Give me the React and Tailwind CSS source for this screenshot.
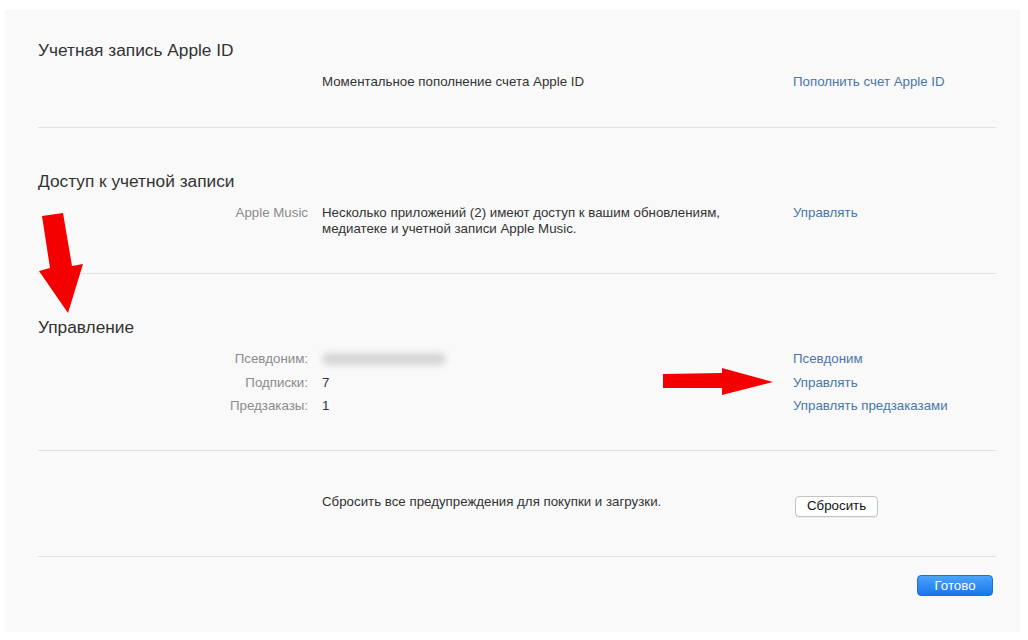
import React from "react";

const font = { fontFamily: '"Liberation Sans", Arial, sans-serif' };

function Section({ title, children, className = "" }) {
  return (
    <div className={className}>
      {title && (
        <h2 className="text-[17.3px] leading-[20px] text-[#333] ml-[33px]">{title}</h2>
      )}
      {children}
    </div>
  );
}

function Row({ label, value, link }) {
  return (
    <div className="grid grid-cols-[303px_457px_1fr] gap-x-[14px] text-[13.3px]">
      <div className="text-right text-[#8b8b8b]">{label}</div>
      <div className="text-[#333]">{value}</div>
      <div className="text-[#4a77aa]">{link}</div>
    </div>
  );
}

function Divider() {
  return <div className="ml-[33px] mr-[24px] h-px bg-[#e1e1e1]" />;
}

export default function App() {
  return (
    <div className="relative w-[1028px] h-[640px] bg-white pt-[10px] pl-[5px] pr-[8px] pb-[8px]" style={font}>
      <div className="h-full bg-[#f9f9f9] flex flex-col">
        {/* Apple ID */}
        <Section title="Учетная запись Apple ID" className="pt-[30px] pb-[37px]">
          <div className="mt-[14px] leading-[16px]">
            <Row value="Моментальное пополнение счета Apple ID" link="Пополнить счет Apple ID" />
          </div>
        </Section>
        <Divider />

        {/* Access */}
        <Section title="Доступ к учетной записи" className="pt-[43px] pb-[36px]">
          <div className="mt-[14px] leading-[16px]">
            <Row
              label="Apple Music"
              value={
                <>
                  Несколько приложений (2) имеют доступ к вашим обновлениям,
                  <br />
                  медиатеке и учетной записи Apple Music.
                </>
              }
              link="Управлять"
            />
          </div>
        </Section>
        <Divider />

        {/* Manage */}
        <Section title="Управление" className="pt-[43px] pb-[32px]">
          <div className="mt-[10px] leading-[23.5px]">
            <Row
              label="Псевдоним:"
              value={
                <div className="h-[23.5px] flex items-center">
                  <div className="w-[124px] h-[12px] rounded-full bg-[#d6d6d6] blur-[3px]" />
                </div>
              }
              link="Псевдоним"
            />
            <Row label="Подписки:" value="7" link="Управлять" />
            <Row label="Предзаказы:" value="1" link="Управлять предзаказами" />
          </div>
        </Section>
        <Divider />

        {/* Reset */}
        <div className="pt-[43px] pb-[39px] grid grid-cols-[303px_457px_1fr] gap-x-[14px] text-[13.3px] leading-[16px]">
          <div />
          <div className="text-[#333]">Сбросить все предупреждения для покупки и загрузки.</div>
          <div className="pt-[2px]">
            <button className="ml-[2px] h-[21px] px-[11px] rounded-[4px] border border-[#c4c4c4] bg-white text-[13.3px] text-[#111] shadow-[0_1px_0_rgba(0,0,0,0.05)]">
              Сбросить
            </button>
          </div>
        </div>
        <Divider />

        <div className="flex justify-end pr-[27px] pt-[18px]">
          <button className="w-[76px] h-[21px] rounded-[4px] bg-gradient-to-b from-[#4aa3fb] to-[#1a75ec] border border-[#1b6fd8] text-white text-[13.3px] leading-[19px]">
            Готово
          </button>
        </div>
      </div>

      {/* annotation arrows */}
      <svg className="absolute inset-0 pointer-events-none" width="1028" height="640" viewBox="0 0 1028 640">
        <polygon points="42,216 63,213 72,266 83,264 68,313 39,271 50,268" fill="#f40000" />
        <polygon points="663,374 722,373 722,368 773,382 722,395 722,388 663,388" fill="#f40000" />
      </svg>
    </div>
  );
}
